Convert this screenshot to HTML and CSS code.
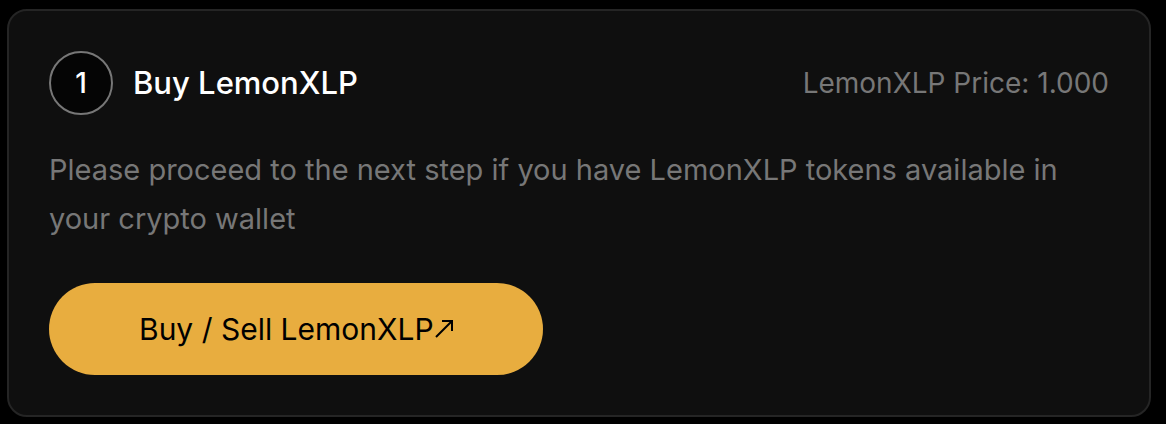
FILE: index.html
```html
<!DOCTYPE html>
<html lang="en">
<head>
<meta charset="utf-8">
<title>Buy LemonXLP</title>
<link rel="stylesheet" href="styles.css">
</head>
<body>
<section class="card">
  <header class="card-header">
    <span class="step">1</span>
    <h2 class="title">Buy LemonXLP</h2>
    <p class="price">LemonXLP Price: 1.000</p>
  </header>
  <p class="description">Please proceed to the next step if you have LemonXLP tokens available in your crypto wallet</p>
  <button class="trade" type="button">
    <span>Buy / Sell LemonXLP</span>
    <svg class="arrow" viewBox="0 0 20 20" aria-hidden="true"><path d="M2 18 18 2M8 2h10v10"/></svg>
  </button>
</section>
</body>
</html>
```
FILE: styles.css
```css
* {
  box-sizing: border-box;
}

body {
  margin: 0;
  padding: 9px 15px 7px 7px;
  background: #000;
  font-family: Inter, "Open Sans", sans-serif;
}

.card {
  padding: 40px;
  border: 2px solid #252525;
  border-radius: 20px;
  background: #0f0f0f;
}

.card-header {
  display: flex;
  align-items: center;
  gap: 20px;
}

.step {
  display: grid;
  place-items: center;
  width: 64px;
  height: 64px;
  border: 2px solid #777;
  border-radius: 50%;
  background: #050505;
  color: #fff;
  font-size: 28px;
  font-weight: 500;
}

.title {
  margin: 0;
  color: #fff;
  font-size: 31px;
  font-weight: 500;
  line-height: 36px;
}

.price {
  margin: 0 0 0 auto;
  color: #777;
  font-size: 28px;
}

.description {
  margin: 30px 0 40px;
  color: #777;
  font-size: 29px;
  line-height: 49px;
}

.trade {
  display: flex;
  align-items: center;
  height: 92px;
  padding: 0 89px 0 90px;
  border: 0;
  border-radius: 46px;
  background: #e8ad3f;
  color: #000;
  font: inherit;
  font-size: 30px;
}

.arrow {
  width: 20px;
  height: 20px;
  fill: none;
  stroke: currentColor;
  stroke-width: 2;
}
```
